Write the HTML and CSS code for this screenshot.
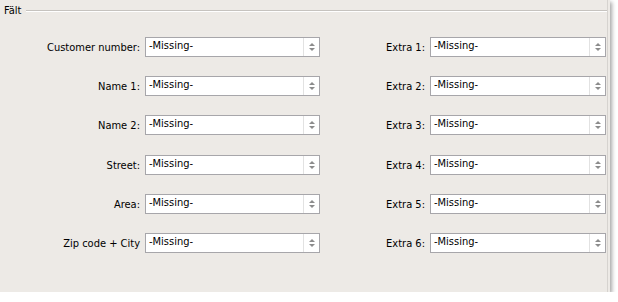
FILE: index.html
```html
<!DOCTYPE html>
<html>
  <head>
    <meta charset="UTF-8" />
    <title>Fält</title>
    <link rel="stylesheet" href="styles.css">
  </head>
  <body>
    <div class="panel">
      <div class="group">
        <div class="group-title">
          <span class="caption">Fält</span>
          <span class="rule"></span>
        </div>
        <div class="fields">
          <label>Customer number:</label>
          <div class="combo"><span class="value">-Missing-</span><span class="spin"><i class="up"></i><i class="down"></i></span></div>
          <label>Extra 1:</label>
          <div class="combo"><span class="value">-Missing-</span><span class="spin"><i class="up"></i><i class="down"></i></span></div>

          <label>Name 1:</label>
          <div class="combo"><span class="value">-Missing-</span><span class="spin"><i class="up"></i><i class="down"></i></span></div>
          <label>Extra 2:</label>
          <div class="combo"><span class="value">-Missing-</span><span class="spin"><i class="up"></i><i class="down"></i></span></div>

          <label>Name 2:</label>
          <div class="combo"><span class="value">-Missing-</span><span class="spin"><i class="up"></i><i class="down"></i></span></div>
          <label>Extra 3:</label>
          <div class="combo"><span class="value">-Missing-</span><span class="spin"><i class="up"></i><i class="down"></i></span></div>

          <label>Street:</label>
          <div class="combo"><span class="value">-Missing-</span><span class="spin"><i class="up"></i><i class="down"></i></span></div>
          <label>Extra 4:</label>
          <div class="combo"><span class="value">-Missing-</span><span class="spin"><i class="up"></i><i class="down"></i></span></div>

          <label>Area:</label>
          <div class="combo"><span class="value">-Missing-</span><span class="spin"><i class="up"></i><i class="down"></i></span></div>
          <label>Extra 5:</label>
          <div class="combo"><span class="value">-Missing-</span><span class="spin"><i class="up"></i><i class="down"></i></span></div>

          <label>Zip code + City</label>
          <div class="combo"><span class="value">-Missing-</span><span class="spin"><i class="up"></i><i class="down"></i></span></div>
          <label>Extra 6:</label>
          <div class="combo"><span class="value">-Missing-</span><span class="spin"><i class="up"></i><i class="down"></i></span></div>
        </div>
      </div>
    </div>
  </body>
</html>
```

FILE: styles.css
```css
body {
  margin: 0;
  background: #ffffff;
  font-family: "DejaVu Sans Condensed", "DejaVu Sans", sans-serif;
  font-size: 11px;
  color: #000;
}
.panel {
  width: 610px;
  height: 292px;
  background: #edeae6;
  box-shadow: 2px 2px 4px rgba(0,0,0,0.35);
  overflow: hidden;
}
.group {
  height: 100%;
  margin-right: 2px;
  border-right: 1px solid #d6d3cf;
}
.group-title {
  display: flex;
  align-items: center;
  padding: 3px 0 0 4px;
  height: 14px;
}
.caption {
  padding-right: 5px;
}
.rule {
  flex: 1;
  height: 1px;
  background: #c6c3bf;
  border-bottom: 1px solid #ffffff;
  margin-top: 1px;
}
.fields {
  display: grid;
  grid-template-columns: 145px 175px 110px 176px;
  grid-auto-rows: 20px;
  row-gap: 19.2px;
  padding-top: 20px;
}
label {
  text-align: right;
  padding-right: 5px;
  line-height: 20px;
  padding-top: 1px;
  white-space: nowrap;
}
.combo {
  display: flex;
  background: #fff;
  border: 1px solid #a7a6aa;
  box-sizing: border-box;
}
.value {
  flex: 1;
  padding-left: 3px;
  line-height: 15px;
}
.spin {
  width: 15px;
  border-left: 1px solid #e2e2e2;
  display: flex;
  flex-direction: column;
  align-items: center;
  justify-content: center;
  gap: 2px;
}
.spin i {
  width: 0;
  height: 0;
  border-left: 3px solid transparent;
  border-right: 3px solid transparent;
}
.spin .up {
  border-bottom: 3px solid #8c8c8c;
}
.spin .down {
  border-top: 3px solid #8c8c8c;
}
```
